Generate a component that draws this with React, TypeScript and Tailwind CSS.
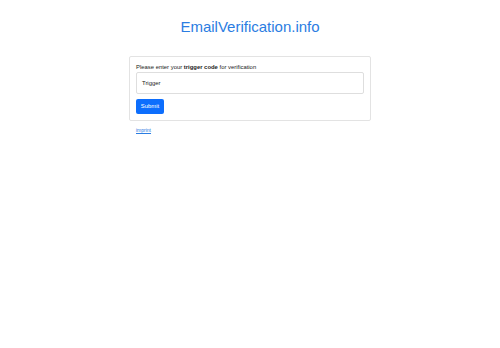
import React from 'react'

const App = () => {
  return (
    <div className="min-h-screen bg-white font-['Liberation_Sans',Arial,sans-serif]">
      <div className="pt-[18px] text-center text-[15px] leading-[18px] text-[#2b7de2]">EmailVerification.info</div>
      <div className="mx-auto mt-[20px] w-[242px]">
        <div className="rounded-[2px] border border-[#e3e3e3] px-[6px] pt-[6px] pb-[6px]">
          <div className="text-[5.9px] leading-[8px] text-[#222]">
            Please enter your <b>trigger code</b> for verification
          </div>
          <div className="mt-[1px] flex h-[22px] items-center rounded-[2px] border border-[#dedede] px-[5px] text-[5.9px] text-[#222]">
            Trigger
          </div>
          <button
            type="button"
            className="mt-[5px] flex h-[15px] w-[28px] items-center justify-center rounded-[2px] bg-[#0d6efd] text-[5.9px] text-white"
          >
            Submit
          </button>
        </div>
        <div className="mt-[6px] px-[7px] text-[5px] leading-[7px]">
          <span className="text-[#2b7de2] underline">imprint</span>
        </div>
      </div>
    </div>
  )
}

export default App
